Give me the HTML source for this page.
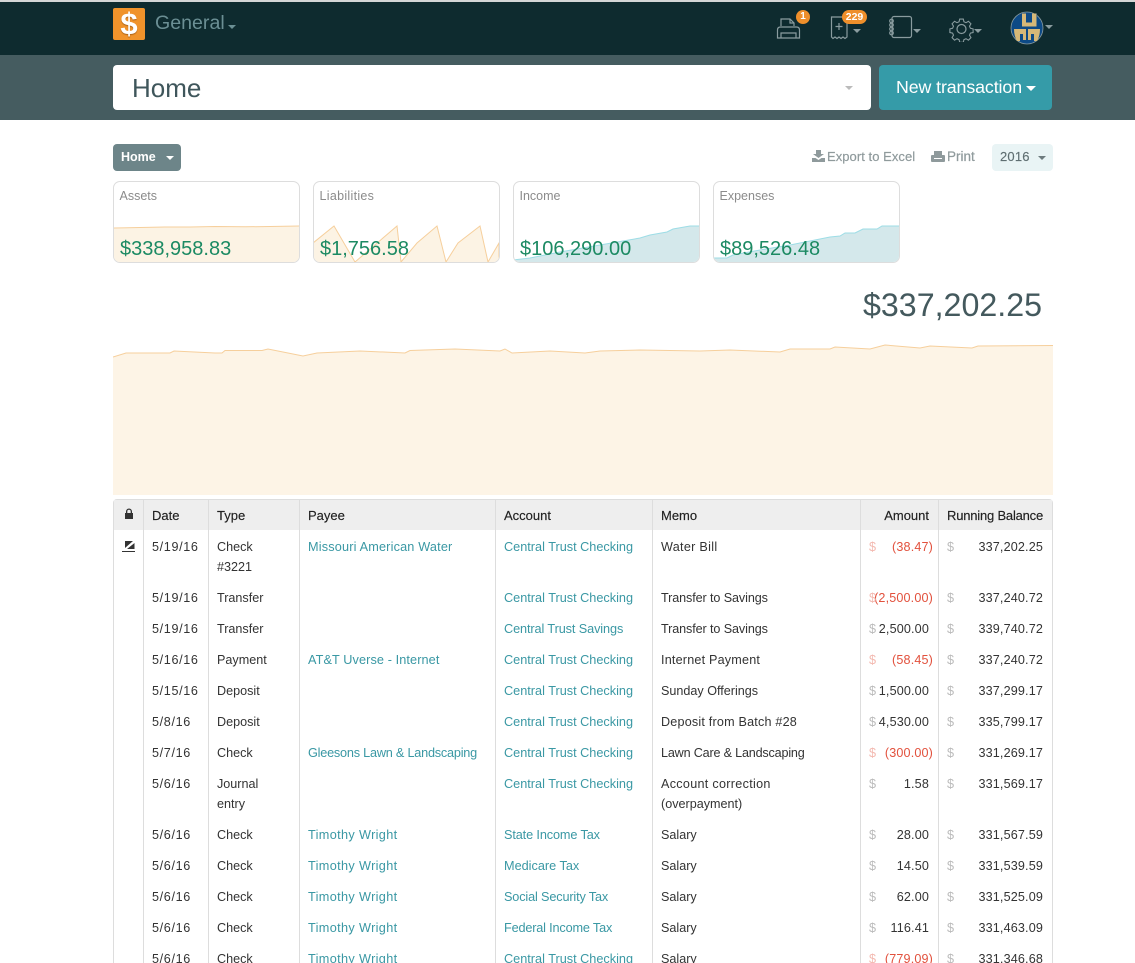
<!DOCTYPE html>
<html><head><meta charset="utf-8"><title>Home</title>
<style>
*{box-sizing:border-box}
html,body{margin:0;padding:0;background:#fff;width:1135px;height:963px;overflow:hidden}
body{font-family:"Liberation Sans",sans-serif;font-size:13px;color:#333}
#w{position:relative;width:1135px;height:963px;overflow:hidden}
.a{position:absolute;white-space:nowrap}
.caret{position:absolute;width:0;height:0;border-left:4px solid transparent;border-right:4px solid transparent;border-top:4px solid #fff}
.card{position:absolute;top:181px;width:187px;height:82px;border:1px solid #ddd;border-radius:7px;overflow:hidden;background:#fff}
.card svg{position:absolute;left:-1px;top:-1px}
.card b{position:absolute;left:5.500px;top:6px;font-weight:400;font-size:12.500px;line-height:16px;color:#8b8b8b}
.card i{position:absolute;left:6px;top:55px;font-style:normal;font-size:20px;line-height:24px;color:#1c8a63}
table{position:absolute;left:113px;top:499px;width:940px;border-collapse:separate;border-spacing:0;table-layout:fixed;border-top:1px solid #ddd;border-left:1px solid #ddd;border-right:1px solid #ddd;border-radius:4px 4px 0 0}
th{background:#eee;height:30px;padding:0 8px;text-align:left;font-weight:400;font-size:13px;color:#222;-webkit-text-stroke:.15px #222;border-left:1px solid #ddd;white-space:nowrap}
td{padding:7px 8px 4px;line-height:20px;vertical-align:top;border-left:1px solid #ddd;font-size:12.600px;position:relative}
td:nth-child(2){letter-spacing:.65px}
th:first-child,td:first-child{border-left:0}
td a{color:#3a98a4;text-decoration:none;font-size:12.700px;white-space:nowrap}
a.t{letter-spacing:.35px}
td.n{text-align:right;padding-right:9px;white-space:nowrap;letter-spacing:.15px}
td.n s{position:absolute;left:8px;top:7px;text-decoration:none;color:#bbb}
td.am{padding-right:9px}
td.neg{color:#e2513d;padding-right:5px}
td.neg s{color:#f3b9b0}
</style></head><body><div id="w">

<div class="a" style="left:0;top:0;width:1135px;height:2px;background:#d4d6d6"></div>
<div class="a" style="left:0;top:2px;width:1135px;height:53px;background:#0e2b2f"></div>
<div class="a" style="left:0;top:55px;width:1135px;height:65px;background:#455c60"></div>

<div class="a" style="left:113px;top:8px;width:32px;height:32px;background:#f0932b;border-radius:2px;color:#fff;font-size:31px;font-weight:700;text-align:center;line-height:32px;text-shadow:0 1px 1px #a8621a">$</div>
<div class="a" style="left:155px;top:11px;font-size:19.600px;line-height:24px;color:#6b8f94">General</div>
<div class="caret" style="left:228px;top:25px;border-top-color:#6b8f94"></div>

<!-- printer -->
<svg class="a" style="left:775px;top:15px" width="28" height="26" viewBox="0 0 28 26" fill="none" stroke="#8a9c9f" stroke-width="1.200">
<path d="M6 11V4h9l4 4v3"/><path d="M15 4v4h4"/><path d="M2.500 23V15q0-3 3-3h16q3 0 3 3v8z"/><path d="M6 23v-5h15v5"/></svg>
<div class="a" style="left:796px;top:10px;width:14px;height:14px;border-radius:7px;background:#ee8f2b;color:#fff;font-size:10px;font-weight:700;line-height:14px;text-align:center">1</div>
<!-- receipt -->
<svg class="a" style="left:830px;top:15px" width="24" height="26" viewBox="0 0 24 26" fill="none" stroke="#8a9c9f" stroke-width="1.200">
<path d="M1.500 2h15.500v20l-2 1.500-2-1.500-2 1.500-2-1.500-2 1.500-2-1.500-2 1.500-1.500-1.500z"/><path d="M9 8v7M5.500 11.500h7"/></svg>
<div class="a" style="left:842px;top:10px;width:25px;height:14px;border-radius:7px;background:#ee8f2b;color:#fff;font-size:10.500px;font-weight:700;line-height:14px;text-align:center">229</div>
<div class="caret" style="left:853px;top:29px;border-top-color:#8a9c9f"></div>
<!-- notebook -->
<svg class="a" style="left:888px;top:15px" width="26" height="26" viewBox="0 0 26 26" fill="none" stroke="#8a9c9f" stroke-width="1.200">
<rect x="4" y="1.500" width="19.500" height="21" rx="2"/><circle cx="3.500" cy="6" r="1.800"/><circle cx="3.500" cy="10" r="1.800"/><circle cx="3.500" cy="14" r="1.800"/><circle cx="3.500" cy="18" r="1.800"/></svg>
<div class="caret" style="left:913px;top:29px;border-top-color:#8a9c9f"></div>
<!-- gear -->
<svg class="a" style="left:949px;top:16px" width="26" height="26" viewBox="0 0 26 26" fill="none" stroke="#8a9c9f" stroke-width="1.200">
<circle cx="12.500" cy="13" r="4.500"/><path d="M10.500 2h4l.7 3 2.300 1 2.700-1.600 2.800 2.800-1.600 2.700 1 2.300 3 .7v4l-3 .7-1 2.300 1.600 2.700-2.800 2.800-2.700-1.600-2.300 1-.7 3h-4l-.7-3-2.300-1-2.700 1.600-2.800-2.800 1.600-2.700-1-2.300-3-.7v-4l3-.7 1-2.300-1.600-2.700 2.800-2.800 2.700 1.600 2.300-1z" transform="translate(1.250 1.300) scale(.9)"/></svg>
<div class="caret" style="left:974px;top:29px;border-top-color:#8a9c9f"></div>
<!-- avatar -->
<svg class="a" style="left:1010px;top:11px" width="34" height="34" viewBox="0 0 34 34">
<circle cx="17" cy="17" r="16" fill="#0d4a86" stroke="#8a9c9f" stroke-width=".8"/>
<path d="M12 2.500h4.500v9h2v-9H27v14H22v-1h-5v1h-5z" fill="#0d4a86"/>
<path d="M12 2.500h4v9h6v-9h4.500v13h-14.500z" fill="#d6b877"/>
<path d="M4 18h12v11h-3v-6h-3v7h-3q-3-5-3-12zM18 18h12q0 7-3 12h-3v-7h-3v6h-3z" fill="#d6b877"/></svg>
<div class="caret" style="left:1045px;top:25px;border-top-color:#8a9c9f"></div>

<div class="a" style="left:113px;top:65px;width:758px;height:45px;background:#fff;border-radius:4px"></div>
<div class="a" style="left:132px;top:72px;font-size:26px;line-height:32px;color:#3f565b">Home</div>
<div class="caret" style="left:845px;top:86px;border-top-color:#bbb"></div>
<div class="a" style="left:879px;top:65px;width:173px;height:45px;background:#359ba8;border-radius:4px"></div>
<div class="a" style="left:896px;top:77px;font-size:17.800px;line-height:21px;color:#fff;letter-spacing:-.1px">New transaction</div>
<div class="caret" style="left:1026px;top:86px;border-left-width:5px;border-right-width:5px;border-top-width:5px"></div>

<div class="a" style="left:113px;top:144px;width:68px;height:27px;background:#6d8589;border-radius:4px"></div>
<div class="a" style="left:121px;top:149px;font-size:12.500px;line-height:16px;font-weight:700;color:#fff">Home</div>
<div class="caret" style="left:166px;top:156px"></div>

<svg class="a" style="left:812px;top:150px" width="13" height="12" viewBox="0 0 13 12" fill="#8f9a9c"><path d="M4 0h5v4h3L6.500 8 1 4h3zM0 8h3.500l3 2 3-2H13v4H0z"/></svg>
<div class="a" style="left:827px;top:149px;font-size:13px;line-height:16px;color:#8f9a9c;-webkit-text-stroke:.2px #8f9a9c;letter-spacing:.05px">Export to Excel</div>
<svg class="a" style="left:931px;top:151px" width="14" height="11" viewBox="0 0 14 11" fill="#8f9a9c"><path d="M3 0h8v4h2q1 0 1 1v5q0 1-1 1H1q-1 0-1-1V5q0-1 1-1h2zM3 7v1h8V7z"/></svg>
<div class="a" style="left:947px;top:149px;font-size:13.500px;line-height:16px;color:#8f9a9c;-webkit-text-stroke:.2px #8f9a9c">Print</div>
<div class="a" style="left:992px;top:144px;width:61px;height:27px;background:#e9f4f5;border-radius:4px"></div>
<div class="a" style="left:1000px;top:149px;font-size:13px;line-height:16px;color:#5f6f72;-webkit-text-stroke:.15px #5f6f72;letter-spacing:.2px">2016</div>
<div class="caret" style="left:1038px;top:156px;border-top-color:#6d7b7e"></div>

<div class="card" style="left:113px"><svg width="187" height="82" viewBox="113 181 187 82">
<path d="M113 228L140 227.500L165 227L190 227L215 226.500L245 226.800L270 226.500L300 226V263H113Z" fill="#fcf3e4" stroke="none"/>
<path d="M113 228L140 227.500L165 227L190 227L215 226.500L245 226.800L270 226.500L300 226" fill="none" stroke="#f6cf9c"/></svg>
<b>Assets</b><i>$338,958.83</i></div>

<div class="card" style="left:313px"><svg width="187" height="82" viewBox="313 181 187 82">
<path d="M313 243L334 226L355 262L397 226L401 262L417 243L437 226L446 262L458 243L480 226L488 262L499 243V263H313Z" fill="#fcf3e4" stroke="#f6cf9c"/></svg>
<b style="letter-spacing:.3px">Liabilities</b><i>$1,756.58</i></div>

<div class="card" style="left:513px"><svg width="187" height="82" viewBox="513 181 187 82">
<path d="M513 260L530 258L560 252L600 245L640 238L650 235L667 232L673 229L690 226L700 226V263H513Z" fill="#d4e8eb"/>
<path d="M513 260L530 258L560 252L600 245L640 238L650 235L667 232L673 229L690 226L700 226" fill="none" stroke="#9ddde6"/></svg>
<b>Income</b><i>$106,290.00</i></div>

<div class="card" style="left:713px"><svg width="187" height="82" viewBox="713 181 187 82">
<path d="M713 258L727 258L733 255L760 250L790 245L820 239L830 237L840 236L845 233L855 233L863 229L877 229L882 226L900 226V263H713Z" fill="#d4e8eb"/>
<path d="M713 258L727 258L733 255L760 250L790 245L820 239L830 237L840 236L845 233L855 233L863 229L877 229L882 226L900 226" fill="none" stroke="#9ddde6"/></svg>
<b>Expenses</b><i>$89,526.48</i></div>

<div class="a" style="left:863px;top:285px;font-size:32.200px;line-height:40px;color:#44595d">$337,202.25</div>

<svg class="a" style="left:113px;top:340px" width="940" height="155" viewBox="113 340 940 155">
<path d="M113 357L126 353L170 353L174 351L215 353L222 353L225 350.500L262 350.500L268 349L303 356L317 353L360 351L405 353L410 350.500L455 349L500 351L505 349L512 353L550 351L585 353L600 351L640 350L700 351L730 350L780 352L790 349L830 349L835 347L870 349L885 345L920 348L930 346L972 348L978 346L1053 345.500V495H113Z" fill="#fdf4e6"/>
<path d="M113 357L126 353L170 353L174 351L215 353L222 353L225 350.500L262 350.500L268 349L303 356L317 353L360 351L405 353L410 350.500L455 349L500 351L505 349L512 353L550 351L585 353L600 351L640 350L700 351L730 350L780 352L790 349L830 349L835 347L870 349L885 345L920 348L930 346L972 348L978 346L1053 345.500" fill="none" stroke="#f6cf9c"/></svg>

<table>
<colgroup><col style="width:29px"><col style="width:65px"><col style="width:91px"><col style="width:196px"><col style="width:157px"><col style="width:208px"><col style="width:78px"><col style="width:114px"></colgroup>
<thead><tr>
<th style="padding:0"><svg width="10" height="11" viewBox="0 0 10 11" style="display:block;margin:0 0 4px 10px" fill="#333"><path d="M2 5V3.500a3 3 0 0 1 6 0V5h1v6H1V5zM3.300 5h3.400V3.500a1.700 1.700 0 0 0-3.400 0z"/></svg></th>
<th>Date</th><th>Type</th><th>Payee</th><th>Account</th><th>Memo</th><th style="text-align:right;padding-right:9px">Amount</th><th style="padding-right:0;letter-spacing:-.2px">Running Balance</th></tr></thead>
<tbody>
<tr><td style="padding:0"><svg width="14" height="13" viewBox="0 0 14 13" style="position:absolute;left:8px;top:10px" fill="#333"><path d="M3 1h8L3 8zM12.500 3v6H5zM0 11h13v1H0z"/></svg></td><td>5/19/16</td><td>Check<br>#3221</td><td><a style="letter-spacing:.17px">Missouri American Water</a></td><td><a>Central Trust Checking</a></td><td><span style="letter-spacing:.3px">Water Bill</span></td><td class="n neg"><s>$</s>(38.47)</td><td class="n"><s>$</s>337,202.25</td></tr>
<tr><td></td><td>5/19/16</td><td>Transfer</td><td></td><td><a>Central Trust Checking</a></td><td><span style="letter-spacing:-.1px">Transfer to Savings</span></td><td class="n neg"><s>$</s>(2,500.00)</td><td class="n"><s>$</s>337,240.72</td></tr>
<tr><td></td><td>5/19/16</td><td>Transfer</td><td></td><td><a style="letter-spacing:-.1px">Central Trust Savings</a></td><td><span style="letter-spacing:-.1px">Transfer to Savings</span></td><td class="n am"><s>$</s>2,500.00</td><td class="n"><s>$</s>339,740.72</td></tr>
<tr><td></td><td>5/16/16</td><td>Payment</td><td><a style="letter-spacing:.1px">AT&amp;T Uverse - Internet</a></td><td><a>Central Trust Checking</a></td><td><span style="letter-spacing:.2px">Internet Payment</span></td><td class="n neg"><s>$</s>(58.45)</td><td class="n"><s>$</s>337,240.72</td></tr>
<tr><td></td><td>5/15/16</td><td>Deposit</td><td></td><td><a>Central Trust Checking</a></td><td>Sunday Offerings</td><td class="n am"><s>$</s>1,500.00</td><td class="n"><s>$</s>337,299.17</td></tr>
<tr><td></td><td>5/8/16</td><td>Deposit</td><td></td><td><a>Central Trust Checking</a></td><td><span style="letter-spacing:.2px">Deposit from Batch #28</span></td><td class="n am"><s>$</s>4,530.00</td><td class="n"><s>$</s>335,799.17</td></tr>
<tr><td></td><td>5/7/16</td><td>Check</td><td><a style="letter-spacing:-.22px">Gleesons Lawn &amp; Landscaping</a></td><td><a>Central Trust Checking</a></td><td><span style="letter-spacing:-.18px">Lawn Care &amp; Landscaping</span></td><td class="n neg"><s>$</s>(300.00)</td><td class="n"><s>$</s>331,269.17</td></tr>
<tr><td></td><td>5/6/16</td><td>Journal<br>entry</td><td></td><td><a>Central Trust Checking</a></td><td><span style="letter-spacing:.3px">Account correction</span><br>(overpayment)</td><td class="n am"><s>$</s>1.58</td><td class="n"><s>$</s>331,569.17</td></tr>
<tr><td></td><td>5/6/16</td><td>Check</td><td><a class="t">Timothy Wright</a></td><td><a style="letter-spacing:-.12px">State Income Tax</a></td><td>Salary</td><td class="n am"><s>$</s>28.00</td><td class="n"><s>$</s>331,567.59</td></tr>
<tr><td></td><td>5/6/16</td><td>Check</td><td><a class="t">Timothy Wright</a></td><td><a>Medicare Tax</a></td><td>Salary</td><td class="n am"><s>$</s>14.50</td><td class="n"><s>$</s>331,539.59</td></tr>
<tr><td></td><td>5/6/16</td><td>Check</td><td><a class="t">Timothy Wright</a></td><td><a style="letter-spacing:-.15px">Social Security Tax</a></td><td>Salary</td><td class="n am"><s>$</s>62.00</td><td class="n"><s>$</s>331,525.09</td></tr>
<tr><td></td><td>5/6/16</td><td>Check</td><td><a class="t">Timothy Wright</a></td><td><a style="letter-spacing:-.17px">Federal Income Tax</a></td><td>Salary</td><td class="n am"><s>$</s>116.41</td><td class="n"><s>$</s>331,463.09</td></tr>
<tr><td></td><td>5/6/16</td><td>Check</td><td><a class="t">Timothy Wright</a></td><td><a>Central Trust Checking</a></td><td>Salary</td><td class="n neg"><s>$</s>(779.09)</td><td class="n"><s>$</s>331,346.68</td></tr>
</tbody></table>
</div></body></html>
